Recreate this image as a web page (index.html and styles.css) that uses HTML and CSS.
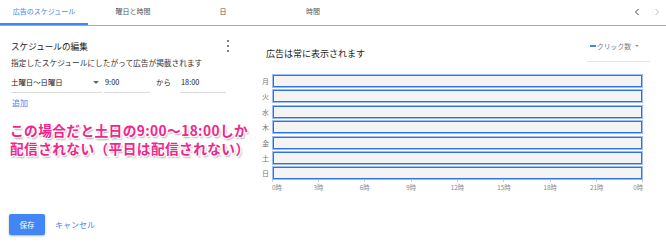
FILE: index.html
```html
<!DOCTYPE html>
<html lang="ja">
<head>
<meta charset="utf-8">
<link rel="stylesheet" href="styles.css">
</head>
<body>
<div class="page">
  <div class="tabs">
    <div class="tab active">広告のスケジュール</div>
    <div class="tab">曜日と時間</div>
    <div class="tab">日</div>
    <div class="tab">時間</div>
    <div class="tab-spacer"></div>
    <div class="nav">
      <svg class="chev" width="6" height="8" viewBox="0 0 6 8"><path d="M4.5 1 L1.5 4 L4.5 7" fill="none" stroke="#444" stroke-width="1"/></svg>
      <svg class="chev" width="6" height="8" viewBox="0 0 6 8"><path d="M1.5 1 L4.5 4 L1.5 7" fill="none" stroke="#bbb" stroke-width="1"/></svg>
    </div>
  </div>
  <div class="main">
    <div class="left">
      <div class="edit-head">
        <div class="edit-title">スケジュールの編集</div>
        <div class="kebab"><span></span><span></span><span></span></div>
      </div>
      <div class="desc">指定したスケジュールにしたがって広告が掲載されます</div>
      <div class="form-row">
        <div class="field select">土曜日～日曜日<span class="caret"></span></div>
        <div class="field time">9:00</div>
        <div class="sep">から</div>
        <div class="field time">18:00</div>
      </div>
      <div class="add">追加</div>
      <div class="note">この場合だと土日の9:00～18:00しか<br>配信されない（平日は配信されない）</div>
    </div>
    <div class="right">
      <div class="chart-head">
        <div class="always">広告は常に表示されます</div>
        <div class="metric"><span class="dash"></span>クリック数<span class="caret small"></span></div>
      </div>
      <div class="chart">
        <div class="day">月</div><div class="bar"></div>
        <div class="day">火</div><div class="bar"></div>
        <div class="day">水</div><div class="bar"></div>
        <div class="day">木</div><div class="bar"></div>
        <div class="day">金</div><div class="bar"></div>
        <div class="day">土</div><div class="bar"></div>
        <div class="day">日</div><div class="bar"></div>
      </div>
      <div class="axis">
        <div class="tick first"><i></i><span>0時</span></div>
        <div class="tick"><i></i><span>3時</span></div>
        <div class="tick"><i></i><span>6時</span></div>
        <div class="tick"><i></i><span>9時</span></div>
        <div class="tick"><i></i><span>12時</span></div>
        <div class="tick"><i></i><span>15時</span></div>
        <div class="tick"><i></i><span>18時</span></div>
        <div class="tick"><i></i><span>21時</span></div>
        <div class="tick last"><i></i><span>0時</span></div>
      </div>
    </div>
  </div>
  <div class="footer">
    <div class="btn-save">保存</div>
    <div class="btn-cancel">キャンセル</div>
  </div>
</div>
</body>
</html>
```
FILE: styles.css
```css
* { box-sizing: border-box; }
html, body { margin: 0; padding: 0; background: #fff; }
body {
  font-family: "Noto Sans CJK JP", "Noto Sans", "Liberation Sans", sans-serif;
  color: #333;
}
.page { width: 666px; height: 252px; display: flex; flex-direction: column; }

.tabs {
  height: 26px;
  display: flex;
  align-items: stretch;
  border-bottom: 1px solid #a8a8a8;
}
.tab {
  width: 90px;
  font-size: 7px;
  line-height: 22px;
  text-align: center;
  color: #555;
  border-bottom: 2px solid transparent;
}
.tab.active { color: #4285f4; border-bottom-color: #4285f4; width: 88px; }
.tab-spacer { flex: 1; }
.nav { display: flex; align-items: center; gap: 14px; padding: 0 6px 2px 0; }
.chev { display: block; }

.main { height: 188px; display: flex; }
.left { width: 224px; margin-left: 11px; display: flex; flex-direction: column; }
.edit-head { margin-top: 13px; height: 14px; display: flex; align-items: center; justify-content: space-between; }
.edit-title { font-size: 8.6px; color: #222; line-height: 14px; }
.kebab { display: flex; flex-direction: column; gap: 2.5px; margin-right: 6px; }
.kebab span { width: 2.2px; height: 2.2px; background: #555; border-radius: 50%; display: block; }
.desc { margin-top: 5px; font-size: 7.7px; line-height: 10px; color: #333; white-space: nowrap; }

.form-row { margin-top: 8px; display: flex; align-items: flex-start; font-size: 7.4px; color: #222; }
.field { height: 17px; line-height: 12px; border-bottom: 1px solid #dcdcdc; padding-bottom: 4px; }
.select { width: 91px; display: flex; align-items: center; height: 17px; }
.select .caret { margin-left: auto; margin-right: 3px; }
.caret {
  display: inline-block;
  width: 0; height: 0;
  border-left: 3px solid transparent;
  border-right: 3px solid transparent;
  border-top: 3px solid #666;
}
.caret.small { border-top-color: #999; margin-left: 4px; border-left-width: 2.5px; border-right-width: 2.5px; border-top-width: 2.5px; }
.time { width: 46px; margin-left: 2px; padding-left: 1px; }
.sep { margin-left: 6px; width: 22px; line-height: 12px; }

.add { margin-top: 5px; font-size: 8px; line-height: 10px; color: #4285f4; padding-left: 1px; }
.note {
  margin-top: 13px;
  margin-left: -1px;
  font-size: 13.7px;
  line-height: 18px;
  font-weight: bold;
  color: #f0268b;
  white-space: nowrap;
  letter-spacing: 0.4px;
  text-shadow:
    1px 0 0 #fff, -1px 0 0 #fff, 0 1px 0 #fff, 0 -1px 0 #fff,
    1px 1px 0 #fff, -1px -1px 0 #fff, 1px -1px 0 #fff, -1px 1px 0 #fff,
    1.5px 2px 2px rgba(0,0,0,0.35);
}

.right { margin-left: 27px; width: 388px; display: flex; flex-direction: column; }
.chart-head { margin-top: 13px; display: flex; justify-content: space-between; align-items: flex-start; }
.always { margin-top: 10px; margin-left: 4px; font-size: 9px; line-height: 10px; color: #222; }
.metric {
  width: 63px;
  padding: 2px 0 10px 3px;
  font-size: 6.8px;
  line-height: 10px;
  color: #777;
  border-bottom: 1px solid #e4e4e4;
  display: flex;
  align-items: center;
}
.dash { width: 6px; height: 1.5px; background: #4285f4; margin-right: 1px; }

.chart {
  margin-top: 12px;
  display: grid;
  grid-template-columns: 10px 371px;
  grid-auto-rows: 14px;
  row-gap: 1.4px;
}
.day { font-size: 7px; line-height: 14px; color: #777; }
.bar {
  background: #f4f4f4;
  border: 1px solid #9dbdf5;
  box-shadow: inset 0 0 0 1px #2f72e6;
}
.axis {
  margin-left: 10px;
  width: 371px;
  display: flex;
  justify-content: space-between;
}
.tick { width: 0; display: flex; flex-direction: column; align-items: center; }
.tick i { display: block; width: 1px; height: 2px; background: #ccc; flex: none; }
.tick span { font-size: 6.3px; line-height: 9px; color: #888; white-space: nowrap; margin-top: 1px; }
.tick.first { align-items: flex-start; }
.tick.last { align-items: flex-end; }

.footer { display: flex; align-items: center; padding-left: 9px; height: 21px; }
.btn-save {
  width: 36px; height: 21px;
  background: #4285f4;
  color: #fff;
  font-size: 7.5px;
  line-height: 21px;
  text-align: center;
  border-radius: 2px;
  box-shadow: 0 1px 2px rgba(0,0,0,0.3);
}
.btn-cancel { margin-left: 10px; font-size: 8px; color: #4285f4; }
```
